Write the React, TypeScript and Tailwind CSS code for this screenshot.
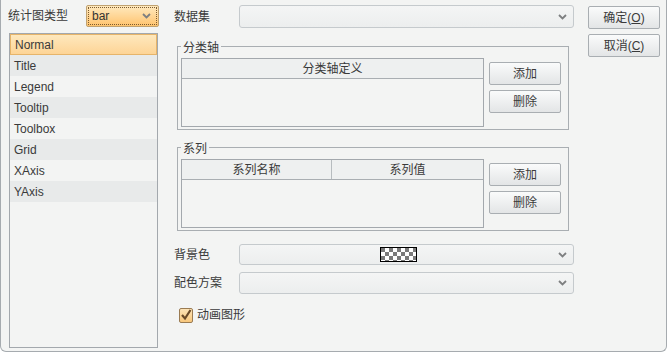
import React from "react";

const Chevron = () => (
  <svg width="9" height="6" viewBox="0 0 9 6" className="shrink-0">
    <path d="M1 1 L4.5 4.5 L8 1" fill="none" stroke="#7d7f80" strokeWidth="1.8" />
  </svg>
);

const Combo = ({ h, children }: { h: string; children?: React.ReactNode }) => (
  <div
    className={`flex-1 ${h} rounded-[3px] border border-[#c5cacd] bg-gradient-to-b from-[#f4f5f5] to-[#eceeee] flex items-center pr-[6px] relative`}
  >
    <div className="flex-1 flex justify-center">{children}</div>
    <Chevron />
  </div>
);

const Btn = ({ children }: { children: React.ReactNode }) => (
  <div className="w-[72px] h-[23px] rounded-[2px] border border-[#a9aeb2] bg-gradient-to-b from-[#fafbfb] to-[#e3e5e6] flex items-center justify-center text-[12px] text-[#3a3a3a]">
    {children}
  </div>
);

const Checker = () => {
  const cells: React.ReactNode[] = [];
  for (let r = 0; r < 4; r++)
    for (let c = 0; c < 9; c++)
      if ((r + c) % 2 === 0)
        cells.push(<rect key={`${r}-${c}`} x={1 + c * 4} y={1 + r * 4} width={4} height={4} fill="#7a7a7a" />);
  return (
    <svg width="37" height="15" viewBox="0 0 37 15">
      <rect x="0" y="0" width="37" height="15" fill="#fff" />
      {cells}
      <rect x="0.5" y="0.5" width="36" height="14" fill="none" stroke="#000" strokeWidth="1" />
    </svg>
  );
};

const Group = ({ title, table }: { title: string; table: React.ReactNode }) => (
  <div className="ml-[3px] w-[392px] h-[84px] border border-[#a9aeb2] relative flex pt-[11px] pl-[3px]">
    <div className="absolute -top-[6px] left-[3px] px-[2px] bg-[#f3f4f3] text-[12px] leading-[14px] text-[#3a3a3a]">
      {title}
    </div>
    <div className="w-[303px] h-[69px] border border-[#a3a8ad] flex flex-col">{table}</div>
    <div className="ml-[5px] mt-[4px] flex flex-col gap-[5px]">
      <Btn>添加</Btn>
      <Btn>删除</Btn>
    </div>
  </div>
);

const items = ["Normal", "Title", "Legend", "Tooltip", "Toolbox", "Grid", "XAxis", "YAxis"];

export default function App() {
  return (
    <div className="w-[667px] h-[352px] bg-[#f3f4f3] border-l border-r border-b border-[#a6abaf] rounded-b-[6px] flex font-['Liberation_Sans','Noto_Sans_CJK_SC',sans-serif] text-[#3a3a3a] text-[12px] overflow-hidden">
      {/* left column */}
      <div className="ml-[7px] flex flex-col">
        <div className="pt-[5px] flex">
          <div className="w-[78px] h-[22px] flex items-center">统计图类型</div>
          <div className="w-[73px] h-[22px] rounded-[2px] border border-[#c0a271] bg-gradient-to-b from-[#ffe9bd] to-[#ffc36c] p-[1px]">
            <div className="w-full h-full border border-dotted border-[#7a5a30] flex items-center pl-[3px] pr-[5px]">
              <span className="flex-1 text-[#333]">bar</span>
              <Chevron />
            </div>
          </div>
        </div>
        <div className="mt-[6px] ml-[1px] w-[149px] h-[315px] border border-[#a3a8ad] bg-[#f3f4f3] flex flex-col">
          {items.map((it, i) => (
            <div
              key={it}
              className={`h-[21px] flex items-center pl-[4px] ${
                i === 0
                  ? "bg-gradient-to-b from-[#fee8bd] to-[#fdd496] border border-[#e6b46a] pl-[3px]"
                  : i % 2 === 1
                  ? "bg-[#e8eaea]"
                  : "bg-[#f3f4f3]"
              }`}
            >
              {it}
            </div>
          ))}
        </div>
      </div>

      {/* middle column */}
      <div className="ml-[15px] w-[400px] flex flex-col">
        <div className="pt-[5px] flex">
          <div className="w-[65px] h-[23px] flex items-center">数据集</div>
          <Combo h="h-[23px]" />
        </div>
        <div className="mt-[18px]">
          <Group
            title="分类轴"
            table={
              <div className="h-[20px] border-b border-[#a9aeb2] bg-[#eef0f0] flex items-center justify-center">
                分类轴定义
              </div>
            }
          />
        </div>
        <div className="mt-[17px]">
          <Group
            title="系列"
            table={
              <div className="h-[20px] border-b border-[#a9aeb2] bg-[#eef0f0] flex">
                <div className="w-[150px] border-r border-[#b7bcbf] flex items-center justify-center">系列名称</div>
                <div className="flex-1 flex items-center justify-center">系列值</div>
              </div>
            }
          />
        </div>
        <div className="mt-[13px] flex">
          <div className="w-[65px] h-[21px] flex items-center">背景色</div>
          <Combo h="h-[21px]">
            <div className="pr-[2px]">
              <Checker />
            </div>
          </Combo>
        </div>
        <div className="mt-[7px] flex">
          <div className="w-[65px] h-[22px] flex items-center">配色方案</div>
          <Combo h="h-[22px]" />
        </div>
        <div className="mt-[12px] ml-[5px] flex items-center gap-[4px]">
          <div className="w-[14px] h-[15px] rounded-[2px] border border-[#9a7b52] bg-gradient-to-b from-[#fde3b5] to-[#f8c77c] flex items-center justify-center">
            <svg width="12" height="12" viewBox="0 0 12 12">
              <path d="M2 6 L5 9.5 L10.5 1" fill="none" stroke="#6a4a28" strokeWidth="2.2" />
            </svg>
          </div>
          <span>动画图形</span>
        </div>
      </div>

      {/* right column */}
      <div className="ml-[14px] pt-[6px] flex flex-col gap-[5px]">
        <Btn>
          确定(<span className="underline">O</span>)
        </Btn>
        <Btn>
          取消(<span className="underline">C</span>)
        </Btn>
      </div>
    </div>
  );
}
